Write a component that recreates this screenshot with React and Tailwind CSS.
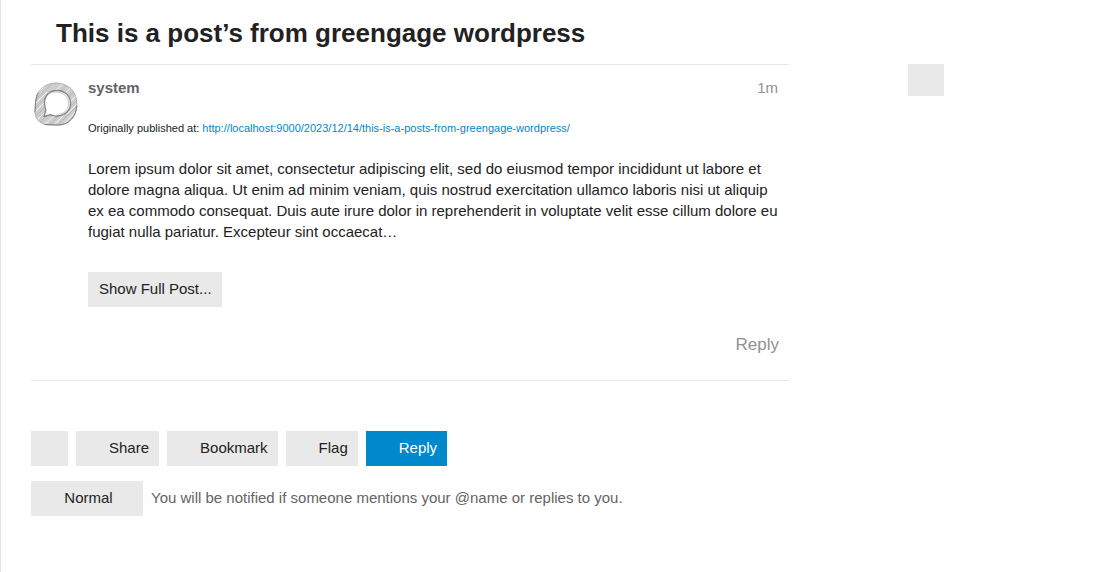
function SystemAvatar() {
  return (
    <svg viewBox="0 0 45 45" className="size-[45px]" role="img" aria-label="system">
      <defs>
        <clipPath id="ring">
          <path
            clipRule="evenodd"
            d="M23 2C11 2 2.500 10.500 2.500 22L2 31C2 39 8 44 17 44L25 44C36 44 44 35 44 23C44 10 35 2 23 2ZM24 9.500C16 9.500 11.500 15.500 11.500 22C11.500 25 12.300 27 12.800 29L11 35.500L17.500 33.700C19.500 34.700 21.500 35.200 24 35C32 34.800 37.500 29.500 37.500 22.500C37.500 15 32 9.500 24 9.500Z"
          />
        </clipPath>
      </defs>
      <g clipPath="url(#ring)">
        <rect width="45" height="45" fill="#cdcdcd" />
        <g stroke="#f6f6f6" strokeWidth="1">
          <path d="M0 17L16 1M0 25L14 11M1 32L13 20M3 40L13 30M10 45L22 34M19 46L32 33M29 45L45 28M34 33L46 21M36 22L46 12M31 13L41 4M22 10L32 1" />
        </g>
        <g stroke="#b3b3b3" strokeWidth="0.8">
          <path d="M2 19L20 2M1 28L13 16M2 36L13 25M6 42L16 33M15 45L27 34M24 45L45 24M35 28L46 17M34 17L44 8M26 11L36 2" />
        </g>
      </g>
      <g fill="none" strokeLinecap="round" strokeLinejoin="round">
        <path d="M23 2C11 2 3 10 2.500 22L2 31C2 39 8 44 17 44L25 44C36 44 44 35 44 23C44 10 35 2 23 2Z" stroke="#aaaaaa" strokeWidth="0.8" />
        <path d="M5 12C3 16 2.500 20 2 31M12 43.500L26 44C36 43.500 43 36 43.800 25" stroke="#777" strokeWidth="0.9" />
        <path d="M24 9.500C16 9.500 11.500 15.500 11.500 22C11.500 25 12.300 27 12.800 29L11 35.500L17.500 33.700C19.500 34.700 21.500 35.200 24 35C32 34.800 37.500 29.500 37.500 22.500C37.500 15 32 9.500 24 9.500Z" fill="#fff" stroke="#858585" strokeWidth="1.3" />
        <path d="M16 12.500C25 8 35.500 13 35.500 23C35.500 29 31 33 26 33.200" stroke="#b5b5b5" strokeWidth="0.8" />
      </g>
    </svg>
  );
}

const button = "h-[35px] bg-[#e9e9e9] pb-0.5 text-[#222222]";

export default function App() {
  return (
    <div className="flex min-h-screen items-start border-l border-[#e4e4e4] bg-white pl-[30px] font-['Liberation_Sans',Arial,sans-serif] text-[15px] leading-[21px] text-[#222222]">
      <main className="min-w-0 max-w-[758px] flex-1">
        <h1 className="pt-4 pb-3.5 pl-[25px] text-[26px] leading-[34px] font-bold">
          This is a post’s from greengage wordpress
        </h1>

        <article className="flex gap-2.5 border-y border-[#e9e9e9] pt-3 pb-6">
          <div className="shrink-0 pt-1 pl-0.5">
            <SystemAvatar />
          </div>
          <div className="min-w-0 flex-1">
            <header className="flex justify-between pr-[11px]">
              <span className="font-bold text-[#646464]">system</span>
              <time className="text-[#919191]">1m</time>
            </header>
            <p className="pt-5 text-[11px] leading-[21px]">
              Originally published at:{" "}
              <a className="text-[#0088cc]" href="http://localhost:9000/2023/12/14/this-is-a-posts-from-greengage-wordpress/">
                http://localhost:9000/2023/12/14/this-is-a-posts-from-greengage-wordpress/
              </a>
            </p>
            <p className="pt-[19px] pr-2">
              Lorem ipsum dolor sit amet, consectetur adipiscing elit, sed do eiusmod tempor incididunt ut labore et
              dolore magna aliqua. Ut enim ad minim veniam, quis nostrud exercitation ullamco laboris nisi ut aliquip
              ex ea commodo consequat. Duis aute irure dolor in reprehenderit in voluptate velit esse cillum dolore eu
              fugiat nulla pariatur. Excepteur sint occaecat…
            </p>
            <button type="button" className={`${button} mt-[30px] block pr-2.5 pl-[11px]`}>
              Show Full Post...
            </button>
            <div className="flex justify-end pt-[27px] pr-2.5">
              <button type="button" className="text-[17px] leading-[22px] text-[#919191]">
                Reply
              </button>
            </div>
          </div>
        </article>

        <div className="flex flex-wrap gap-2 pt-[50px]">
          <button type="button" aria-label="Topic actions" className={`${button} w-[37px]`} />
          <button type="button" className={`${button} pr-2.5 pl-[33px]`}>Share</button>
          <button type="button" className={`${button} pr-2.5 pl-[33px]`}>Bookmark</button>
          <button type="button" className={`${button} pr-2.5 pl-[33px]`}>Flag</button>
          <button type="button" className="h-[35px] bg-[#0088cc] pr-2.5 pb-0.5 pl-[33px] text-white">Reply</button>
        </div>
        <div className="flex items-center gap-2 pt-[15px]">
          <button type="button" className={`${button} w-28 pl-[3px]`}>Normal</button>
          <span className="pb-0.5 text-[#646464]">You will be notified if someone mentions your @name or replies to you.</span>
        </div>
      </main>

      <aside className="ml-[119px] pt-16">
        <button type="button" aria-label="Notification level" className="block h-8 w-9 bg-[#e9e9e9]" />
      </aside>
    </div>
  );
}
